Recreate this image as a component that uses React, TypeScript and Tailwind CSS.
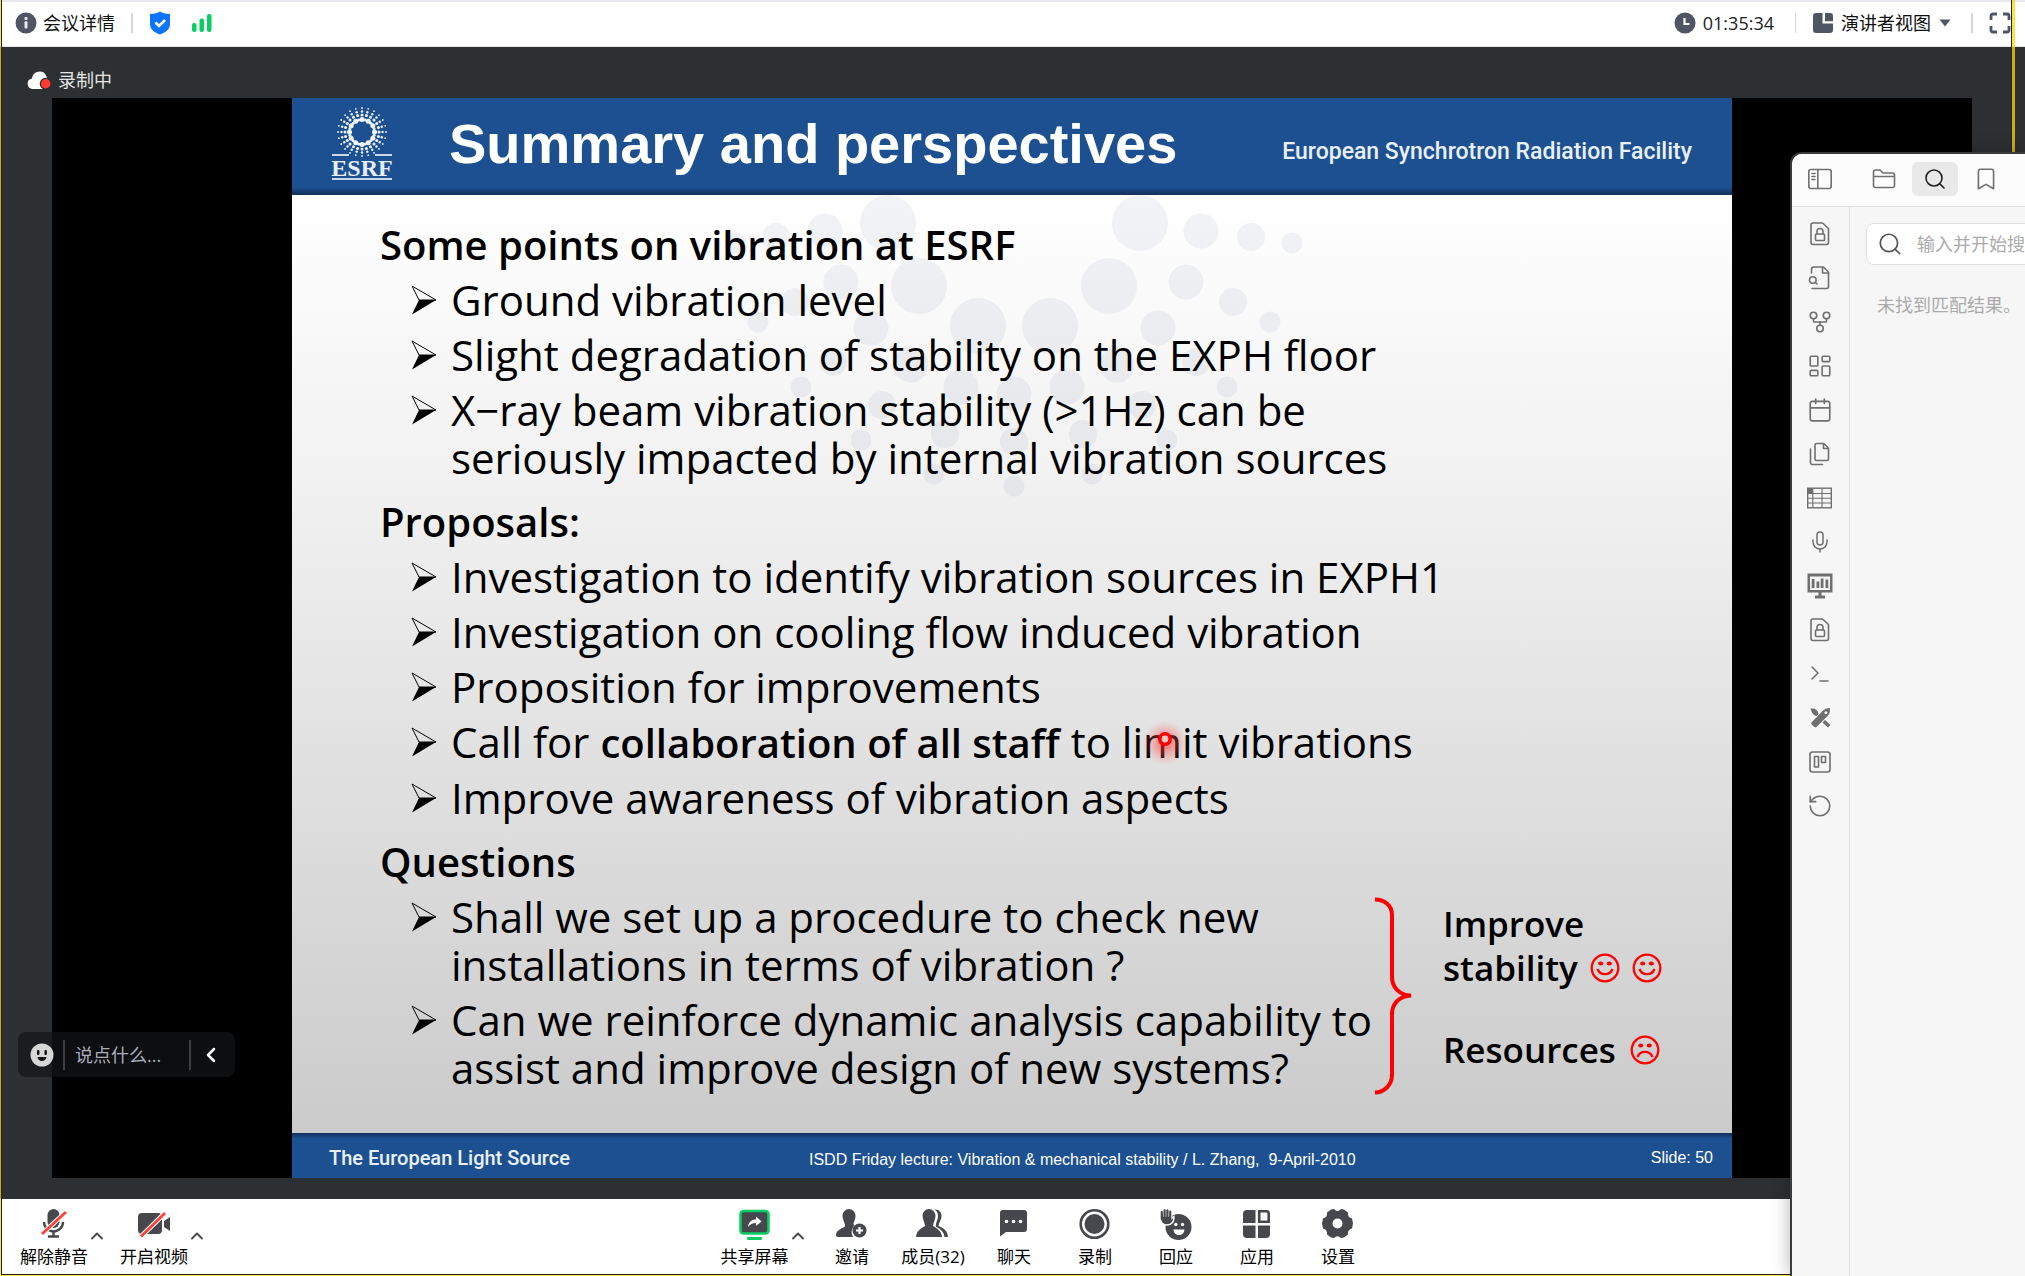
import React from "react";
import {
  Bookmark,
  Calendar,
  ChevronLeft,
  ChevronUp,
  GitFork,
  LayoutDashboard,
  Mic,
  RotateCcw,
  Search,
  Terminal,
} from "lucide-react";

/* ---------- top bar ---------- */

function InfoIcon() {
  return (
    <svg viewBox="0 0 22 22" className="size-[22px]" aria-hidden="true">
      <circle cx="11" cy="11" r="10.5" fill="#4f5563" />
      <rect x="9.5" y="5" width="3" height="3" rx="1" fill="#e8eaf0" />
      <rect x="9.5" y="9.2" width="3" height="7.3" rx="1" fill="#e8eaf0" />
    </svg>
  );
}

function ShieldIcon() {
  return (
    <svg viewBox="0 0 22 24" className="h-6 w-[22px]" aria-hidden="true">
      <path d="M11 .5 C14 2.3 17.5 3 21 3 V13 C21 18.500 16.500 21.500 11 23.500 C5.500 21.500 1 18.500 1 13 V3 C4.500 3 8 2.300 11 .5Z" fill="#0a74ff" />
      <path d="M6.500 11.500 L10 15 L16 9" fill="none" stroke="#fff" strokeWidth="2.600" />
    </svg>
  );
}

function SignalIcon() {
  return (
    <svg viewBox="0 0 22 20" className="h-5 w-[22px]" fill="#07cf63" aria-hidden="true">
      <rect x="1" y="10" width="4.500" height="9" rx="2" />
      <rect x="8.500" y="5.500" width="4.500" height="13.500" rx="2" />
      <rect x="16" y="1" width="4.500" height="18" rx="2" />
    </svg>
  );
}

function ClockIcon() {
  return (
    <svg viewBox="0 0 22 22" className="size-[22px]" aria-hidden="true">
      <circle cx="11" cy="11" r="10.500" fill="#4f5563" />
      <path d="M10.500 6 V12 H15.500" fill="none" stroke="#fff" strokeWidth="2.200" />
    </svg>
  );
}

function ViewIcon() {
  return (
    <svg viewBox="0 0 20 20" className="size-5" fill="#4f5563" aria-hidden="true">
      <path d="M3 0 H9.500 V10.500 H20 V17 a3 3 0 0 1 -3 3 H3 a3 3 0 0 1 -3 -3 V3 a3 3 0 0 1 3 -3Z" />
      <path d="M12 0 H17 a3 3 0 0 1 3 3 V8.200 H12Z" />
    </svg>
  );
}

function FullscreenIcon() {
  return (
    <svg viewBox="0 0 22 22" className="size-[22px]" fill="none" stroke="#4f5563" strokeWidth="2.800" aria-hidden="true">
      <path d="M2 8 V4 a2 2 0 0 1 2 -2 H8 M14 2 H18 a2 2 0 0 1 2 2 V8 M20 14 V18 a2 2 0 0 1 -2 2 H14 M8 20 H4 a2 2 0 0 1 -2 -2 V14" />
    </svg>
  );
}

function TopBar() {
  return (
    <header className="flex h-[47px] shrink-0 items-center justify-between border-t-2 border-b border-[#e7e9ef] bg-white pr-[14px] pb-0.5 pl-[15px] text-lg text-[#111]">
      <div className="flex items-center">
        <button type="button" className="flex items-center gap-[6px]">
          <InfoIcon />
          <span>会议详情</span>
        </button>
        <span className="ml-4 h-5 w-0.5 bg-[#d3d6de]" />
        <span className="ml-4">
          <ShieldIcon />
        </span>
        <span className="ml-5">
          <SignalIcon />
        </span>
      </div>
      <div className="flex items-center">
        <ClockIcon />
        <time className="ml-[7px] text-[#222]">01:35:34</time>
        <span className="ml-[21px] h-5 w-px bg-[#d3d6de]" />
        <button type="button" className="ml-[17px] flex items-center gap-2">
          <ViewIcon />
          <span>演讲者视图</span>
          <svg viewBox="0 0 12 8" className="h-2 w-3" aria-hidden="true">
            <path d="M.5 .5 H11.500 L6 7.500Z" fill="#4f5563" />
          </svg>
        </button>
        <span className="ml-5 h-5 w-0.5 bg-[#d3d6de]" />
        <button type="button" aria-label="全屏" className="ml-4">
          <FullscreenIcon />
        </button>
      </div>
    </header>
  );
}

/* ---------- slide ---------- */

const RAYS = Array.from({ length: 24 }, (_, i) => (i * Math.PI * 2) / 24);

function EsrfLogo() {
  return (
    <svg viewBox="0 0 62 76" className="h-[76px] w-[62px] shrink-0" aria-label="ESRF">
      <g fill="#eef4fb">
        {RAYS.map((a, i) =>
          [
            [12.5, i % 2 ? 1.5 : 2.5],
            [17, 1.5],
            [20.5, 1.2],
            [24, 0.9],
          ].map(([d, r]) => (
            <circle key={`${i}-${d}`} cx={31 + d * Math.cos(a)} cy={26 + d * Math.sin(a)} r={r} />
          ))
        )}
      </g>
      <path d="M1 49 H18 M44 49 H61 M1 73 H61" stroke="#c9d8ee" strokeWidth="2" />
      <text x="31" y="70" textAnchor="middle" fill="#e6eefa" fontSize="24" fontWeight="700" fontFamily="Liberation Serif, serif">
        ESRF
      </text>
    </svg>
  );
}

const DOTS: [number, [number, number][]][] = [
  [28, [[188, 28], [440, 28], [219, 91], [409, 91], [278, 131], [350, 131]]],
  [17.5, [[125, 36], [501, 36], [141, 87], [486, 87], [171, 133], [458, 133], [211, 170], [417, 170], [261, 192], [367, 192], [314, 199]]],
  [14, [[76, 42], [551, 42], [95, 107], [533, 107], [133, 167], [496, 167], [182, 210], [442, 210], [245, 239], [383, 239], [314, 247]]],
  [10.5, [[36, 48], [592, 48], [58, 127], [570, 127], [101, 192], [527, 192], [161, 245], [467, 245], [234, 279], [392, 279], [314, 291]]],
];

function DotRing() {
  return (
    <svg viewBox="0 0 628 304" className="absolute top-0 left-[408px] h-[304px] w-[628px]" aria-hidden="true">
      <g fill="#4a6490" fillOpacity="0.08">
        {DOTS.map(([r, pts]) => pts.map(([x, y]) => <circle key={`${x}-${y}`} cx={x} cy={y} r={r} />))}
      </g>
    </svg>
  );
}

function Bullet() {
  return (
    <svg viewBox="0 0 26 30" className="mt-[9px] h-[30px] w-[26px] shrink-0" aria-hidden="true">
      <path d="M1 1 L25 15 L8 15Z" fill="none" stroke="#000" strokeWidth="1" />
      <path d="M1 29.500 L25 15 H8Z" fill="#000" />
    </svg>
  );
}

function Section({ title, items }: { title: string; items: React.ReactNode[] }) {
  return (
    <section>
      <h2 className="text-[40px] leading-[48px] font-semibold">{title}</h2>
      <ul className="text-[42px] leading-[48px]">
        {items.map((item, i) => (
          <li key={i} className="mt-[7px] flex gap-[14px] pl-[31px]">
            <Bullet />
            <span>{item}</span>
          </li>
        ))}
      </ul>
    </section>
  );
}

function Face({ sad = false }: { sad?: boolean }) {
  return (
    <svg viewBox="0 0 30 30" className="size-[30px]" fill="none" stroke="#f00" strokeWidth="2.300" aria-label={sad ? "☹" : "☺"}>
      <circle cx="15" cy="15" r="13.300" />
      <ellipse cx="10.700" cy="10.500" rx="2.600" ry="2" fill="#f00" stroke="none" />
      <ellipse cx="19.300" cy="10.500" rx="2.600" ry="2" fill="#f00" stroke="none" />
      <path d={sad ? "M7.500 22 a8 8 0 0 1 15 0" : "M7.500 16 a8 8 0 0 0 15 0"} />
    </svg>
  );
}

function Laser() {
  return (
    <svg viewBox="0 0 60 60" className="absolute top-0 -left-2 size-[60px] max-w-none" aria-hidden="true">
      <defs>
        <radialGradient id="laser">
          <stop offset="0.1" stopColor="#ff3030" stopOpacity="0.6" />
          <stop offset="0.8" stopColor="#ff7070" stopOpacity="0" />
        </radialGradient>
      </defs>
      <circle cx="30" cy="30" r="28" fill="url(#laser)" />
      <circle cx="30" cy="26" r="5.200" fill="#f6c8c8" stroke="#f00" strokeWidth="3.600" />
    </svg>
  );
}

function Slide() {
  return (
    <article className="flex w-3/4 flex-col">
      <div className="flex h-[97px] shrink-0 items-center bg-linear-to-b from-[#1d5091] from-92% to-[#12305a] pr-10 pb-[5px] pl-[39px] text-white">
        <EsrfLogo />
        <h1 className="ml-14 flex-1 font-['Liberation_Sans',sans-serif] text-[56px] leading-[64px] font-bold whitespace-nowrap">
          Summary and perspectives
        </h1>
        <p className="mt-4 font-['Roboto',sans-serif] text-[23px] font-medium whitespace-nowrap text-[#e9f0fa]">
          European Synchrotron Radiation Facility
        </p>
      </div>

      <div className="relative flex-1 bg-linear-to-b from-white via-[#f0f0f0] via-33% to-[#cbcbcb]">
        <DotRing />
        <div className="relative flex flex-col gap-4 pt-[26px] pl-[88px] font-['Open_Sans',sans-serif] whitespace-nowrap text-black">
          <Section
            title="Some points on vibration at ESRF"
            items={[
              "Ground vibration level",
              "Slight degradation of stability on the EXPH floor",
              <>
                X−ray beam vibration stability (&gt;1Hz) can be
                <br />
                seriously impacted by internal vibration sources
              </>,
            ]}
          />
          <Section
            title="Proposals:"
            items={[
              "Investigation to identify vibration sources in EXPH1",
              "Investigation on cooling flow induced vibration",
              "Proposition for improvements",
              <>
                Call for <strong className="text-[40px] font-semibold">collaboration of all staff</strong> to li
                <span className="relative">
                  m
                  <Laser />
                </span>
                it vibrations
              </>,
              "Improve awareness of vibration aspects",
            ]}
          />
          <div className="flex">
            <div className="w-[995px]">
              <Section
                title="Questions"
                items={[
                  <>
                    Shall we set up a procedure to check new
                    <br />
                    installations in terms of vibration ?
                  </>,
                  <>
                    Can we reinforce dynamic analysis capability to
                    <br />
                    assist and improve design of new systems?
                  </>,
                ]}
              />
            </div>
            <svg viewBox="0 0 37 198" className="mt-[59px] h-[198px] w-[37px] shrink-0" fill="none" stroke="#f00" strokeWidth="4" aria-hidden="true">
              <path d="M0 2.500 C9 2.500 17 8 17 18 V80 C17 90 24 98 36 98.500 C24 99 17 107 17 117 V178 C17 188 9 195.500 0 195.500" />
            </svg>
            <div className="mt-16 ml-[31px] text-[35px] leading-[44px] font-semibold">
              <p>Improve</p>
              <p className="flex items-center gap-3">
                stability <Face /> <Face />
              </p>
              <p className="mt-[38px] flex items-center gap-[14px]">
                Resources <Face sad />
              </p>
            </div>
          </div>
        </div>
      </div>

      <footer className="flex h-[45px] shrink-0 items-center justify-between bg-linear-to-b from-[#12305a] to-[#1d5091] to-12% pt-1 pr-[19px] pl-[37px] text-white">
        <span className="font-['Roboto',sans-serif] text-xl font-medium text-[#e9f0fa]">The European Light Source</span>
        <span className="mt-1 mr-14 font-['Liberation_Sans',sans-serif] text-base whitespace-pre">
          {"ISDD Friday lecture: Vibration & mechanical stability / L. Zhang,  9-April-2010"}
        </span>
        <span className="font-['Liberation_Sans',sans-serif] text-base">Slide: 50</span>
      </footer>
    </article>
  );
}

/* ---------- stage ---------- */

function ChatBubble() {
  return (
    <form className="absolute bottom-[122px] left-[18px] flex h-[45px] w-[217px] items-center rounded-lg bg-[#121417]/70 text-lg">
      <button type="button" aria-label="表情" className="ml-3">
        <svg viewBox="0 0 24 24" className="size-6" aria-hidden="true">
          <circle cx="12" cy="12" r="11.500" fill="#d6d6d6" />
          <rect x="7" y="7" width="2.400" height="5" rx="1" fill="#111" />
          <rect x="14.500" y="7" width="2.400" height="5" rx="1" fill="#111" />
          <path d="M7.500 14 H16.500 a4.500 4 0 0 1 -9 0Z" fill="#111" />
        </svg>
      </button>
      <span className="ml-[9px] h-[30px] w-0.5 bg-[#3c3e42]" />
      <input
        aria-label="说点什么"
        placeholder="说点什么..."
        className="ml-[10px] w-0 flex-1 bg-transparent text-white outline-none placeholder:text-[#a9adbd]"
      />
      <span className="h-[30px] w-0.5 bg-[#3c3e42]" />
      <button type="button" aria-label="收起" className="mr-3 ml-2 text-white">
        <ChevronLeft className="size-6" strokeWidth={2.5} />
      </button>
    </form>
  );
}

function Stage() {
  return (
    <main className="relative flex flex-1 flex-col bg-[#2d3033] pr-[53px] pb-[21px] pl-[52px]">
      <div className="-ml-[25px] flex h-[51px] items-center gap-[7px] pt-[14px] text-lg text-[#e4e4e4]">
        <svg viewBox="0 0 24 20" className="h-5 w-6" aria-hidden="true">
          <path d="M5.500 19 a5.300 5.300 0 0 1 -.5 -10.500 A7.500 7.500 0 0 1 19.300 6 L20.500 9 V19Z" fill="#fff" />
          <circle cx="18.700" cy="13.800" r="6" fill="#2d3033" />
          <circle cx="18.700" cy="13.800" r="4.700" fill="#ff3b30" />
        </svg>
        <span>录制中</span>
      </div>
      <div className="flex flex-1 justify-center bg-black">
        <Slide />
      </div>
      <ChatBubble />
    </main>
  );
}

/* ---------- bottom toolbar ---------- */

const INK = "#46484d";

const ICONS = {
  mic: (
    <>
      <rect x="9.500" y="1" width="12" height="19" rx="6" fill={INK} />
      <path d="M6 14 a9.500 9.500 0 0 0 19 0 M15.500 24 V28 M10 28.500 H21" fill="none" stroke={INK} strokeWidth="2.400" />
      <path d="M4 26 L28 4" stroke="#fff" strokeWidth="5" />
      <path d="M4 26 L28 4" stroke="#ff4038" strokeWidth="2.800" />
    </>
  ),
  camera: (
    <>
      <rect x="0" y="5" width="24" height="21" rx="4" fill={INK} />
      <path d="M26 13 L32 9 V23 L26 19Z" fill={INK} />
      <path d="M3 28.500 L27 5" stroke="#fff" strokeWidth="5" />
      <path d="M3 28.500 L27 5" stroke="#ff4038" strokeWidth="2.800" />
    </>
  ),
  share: (
    <>
      <rect x="1.500" y="3" width="28" height="22.500" rx="3" fill={INK} stroke="#07cf63" strokeWidth="2.600" />
      <path d="M9 19 C9.500 14 12.500 11.500 17 11.500 V8.500 L22.500 13.500 L17 18 V15 C13.500 15 11 16.500 9 19Z" fill="#fff" />
      <rect x="8" y="29" width="15" height="3" rx="1" fill="#07cf63" />
    </>
  ),
  invite: (
    <>
      <path d="M13 1 a6.500 6.500 0 0 1 6.500 6.500 C19.500 11 18.500 13 17.500 15 L18 18 A9 9 0 0 0 17 29 H2 a2 2 0 0 1 -2 -2 C0 22 7 20 9 18.500 C9.500 16 6.500 12 6.500 7.500 A6.500 6.500 0 0 1 13 1Z" fill={INK} />
      <circle cx="23.500" cy="22.500" r="7" fill={INK} />
      <path d="M23.500 19 V26 M20 22.500 H27" stroke="#fff" strokeWidth="2.200" />
    </>
  ),
  members: (
    <>
      <path d="M12 1 a6.500 6.500 0 0 1 6.500 6.500 C18.500 12 16 15 16 18 C19 20 24.500 22 25 29 H-1 C-.5 22 5 20 8 18 C8 15 5.500 12 5.500 7.500 A6.500 6.500 0 0 1 12 1Z" fill={INK} />
      <path d="M17.500 1.500 C22 1 24.500 4 24.500 8 C24.500 12 21.500 15 21.500 18 C26 20 30.500 22 31 29 H27.500 C27 23 22.500 21 18.800 18.500 C18.800 14 21 12 21 8 C21 5 20 3 17.500 1.500Z" fill={INK} />
    </>
  ),
  chat: (
    <>
      <path d="M5 2 H26 a3 3 0 0 1 3 3 V21 a3 3 0 0 1 -3 3 H8 L2 28.500 V5 a3 3 0 0 1 3 -3Z" fill={INK} />
      <g fill="#fff">
        <circle cx="8.500" cy="13.500" r="1.800" />
        <circle cx="15.500" cy="13.500" r="1.800" />
        <circle cx="22.500" cy="13.500" r="1.800" />
      </g>
    </>
  ),
  record: (
    <>
      <circle cx="15.500" cy="16" r="13.800" fill="none" stroke={INK} strokeWidth="2.600" />
      <circle cx="15.500" cy="16" r="10" fill={INK} />
    </>
  ),
  react: (
    <>
      <circle cx="18.500" cy="19" r="13" fill={INK} />
      <path
        d="M1.800 4 V10 M4.600 2.300 V10 M7.400 2.300 V10 M10.200 3.500 V10"
        stroke="#fff"
        strokeWidth="4"
        strokeLinecap="round"
      />
      <path d="M.5 8 H11.400 V10.500 L14 8.500 C14 13 12 17 7 17 C3 17 .5 14 .5 11Z" fill={INK} stroke="#fff" strokeWidth="1.400" />
      <path
        d="M1.800 4 V11 M4.600 2.300 V11 M7.400 2.300 V11 M10.200 3.500 V11"
        stroke={INK}
        strokeWidth="2.200"
        strokeLinecap="round"
      />
      <circle cx="15.800" cy="16.500" r="1.700" fill="#fff" />
      <circle cx="22.500" cy="16.500" r="1.700" fill="#fff" />
      <path d="M13.500 21.500 H24.500 a5.500 5.500 0 0 1 -11 0Z" fill="#fff" />
    </>
  ),
  apps: (
    <>
      <path d="M6 2 H14.500 V15 H2 V6 a4 4 0 0 1 4 -4Z M2 17.500 H14.500 V30 H6 a4 4 0 0 1 -4 -4Z M17 17.500 H29 V26 a4 4 0 0 1 -4 4 H17Z" fill={INK} />
      <path d="M18.200 3.200 H25.500 a2.200 2.200 0 0 1 2.200 2.200 V13.800 H18.200Z" fill="#fff" stroke={INK} strokeWidth="2.600" />
    </>
  ),
  settings: (
    <path
      fillRule="evenodd"
      fill={INK}
      d="M9 1.500 L12 1 Q15.500 5 19 1 L22 1.500 L26 4.500 Q25.500 9.500 30 10.500 L31 15.500 L30 20.500 Q25.500 21.500 26 26.500 L22 29.500 L19 30 Q15.500 26.500 12 30 L9 29.500 L5 26.500 Q5.500 21.500 1 20.500 L0 15.500 L1 10.500 Q5.500 9.500 5 4.500Z M15.500 10.500 a5 5 0 1 0 0 10 a5 5 0 1 0 0 -10Z"
    />
  ),
};

function Tool({ icon, label, width = "w-[81px]" }: { icon: keyof typeof ICONS; label: string; width?: string }) {
  return (
    <button type="button" className={`flex shrink-0 flex-col items-center whitespace-nowrap ${width}`}>
      <svg viewBox="0 0 32 32" className="size-8 overflow-visible" aria-hidden="true">
        {ICONS[icon]}
      </svg>
      <span className="mt-[5px] text-[17px] leading-6">{label}</span>
    </button>
  );
}

function More({ label }: { label: string }) {
  return (
    <button type="button" aria-label={label} className="mt-[18px] size-5 shrink-0 self-start text-[#46484d]">
      <ChevronUp className="size-5" strokeWidth={2.2} />
    </button>
  );
}

function Toolbar() {
  return (
    <nav className="flex h-[77px] shrink-0 items-start bg-white pt-[9px] text-black">
      <div className="flex flex-1 basis-0 pl-[19px]">
        <Tool icon="mic" label="解除静音" width="w-[70px]" />
        <span className="-ml-0.5">
          <More label="音频选项" />
        </span>
        <span className="w-3" />
        <Tool icon="camera" label="开启视频" width="w-[70px]" />
        <span className="-ml-0.5">
          <More label="视频选项" />
        </span>
      </div>
      <div className="flex pl-[54px]">
        <Tool icon="share" label="共享屏幕" width="w-[70px]" />
        <span className="-ml-0.5">
          <More label="共享选项" />
        </span>
        <span className="w-1" />
        <Tool icon="invite" label="邀请" />
        <Tool icon="members" label="成员(32)" />
        <Tool icon="chat" label="聊天" />
        <Tool icon="record" label="录制" />
        <Tool icon="react" label="回应" />
        <Tool icon="apps" label="应用" />
        <Tool icon="settings" label="设置" />
      </div>
      <div className="flex-1 basis-0" />
    </nav>
  );
}

/* ---------- notes window ---------- */

function Line({ children }: { children: React.ReactNode }) {
  return (
    <svg viewBox="0 0 24 24" className="size-6" fill="none" stroke="currentColor" strokeWidth="1.600" strokeLinecap="round" strokeLinejoin="round" aria-hidden="true">
      {children}
    </svg>
  );
}

const FileLockIcon = () => (
  <Line>
    <path d="M5 1 H14.500 L20.500 6.500 V20.500 a2 2 0 0 1 -2 2 H5 a2 2 0 0 1 -2 -2 V3 a2 2 0 0 1 2 -2Z" />
    <rect x="7.500" y="12" width="9" height="6.500" rx="1" />
    <path d="M9 12 V9.500 a3 3 0 0 1 6 0 V12" />
  </Line>
);

const RIBBON: [string, React.ReactNode][] = [
  ["加密文件", <FileLockIcon />],
  [
    "搜索文件",
    <Line>
      <path d="M3.500 7 V3.500 a2.500 2.500 0 0 1 2.500 -2.500 H15.500 L20.500 6 V20.500 a2 2 0 0 1 -2 2 H4" />
      <path d="M14.500 1.500 V7 H20" />
      <circle cx="4.800" cy="14" r="3.300" />
      <path d="M7.500 16.500 L9 18" />
    </Line>,
  ],
  ["关系图谱", <GitFork className="size-[26px]" strokeWidth={1.5} />],
  ["白板", <LayoutDashboard className="size-[26px]" strokeWidth={1.5} />],
  ["日历", <Calendar className="size-[26px]" strokeWidth={1.5} />],
  [
    "模板",
    <Line>
      <path d="M8.500 1.500 H16 L20.500 6 V17 a1.500 1.500 0 0 1 -1.500 1.500 H8.500 A1.500 1.500 0 0 1 7 17 V3 A1.500 1.500 0 0 1 8.500 1.500Z M15.500 2 V6.500 H20" />
      <path d="M2.500 7 V20.500 a2 2 0 0 0 2 2 H14.500" />
    </Line>,
  ],
  [
    "表格",
    <svg viewBox="0 0 25 22" className="h-[22px] w-[25px]" fill="none" stroke="currentColor" aria-hidden="true">
      <rect x="0.700" y="1.200" width="23.600" height="19.600" strokeWidth="1.400" />
      <path d="M1 6.500 H24 M1 11.300 H24 M1 16 H24 M5.800 1.500 V20.500 M15 1.500 V20.500" strokeWidth="1.100" />
      <rect x="0.500" y="1" width="5.500" height="5.500" fill="currentColor" stroke="none" />
    </svg>,
  ],
  ["录音", <Mic className="size-6" strokeWidth={1.5} />],
  [
    "幻灯片",
    <svg viewBox="0 0 26 26" className="size-[26px]" fill="currentColor" aria-hidden="true">
      <path fillRule="evenodd" d="M.5 .5 H25.500 V19.500 H14.500 V22.500 H18 V25.500 H8 V22.500 H11.500 V19.500 H.5Z M3 3.500 V17 H23 V3.500Z" />
      <path d="M4.700 6 H7.500 V15 H4.700Z M9.500 8.500 H12.300 V15 H9.500Z M13.700 5.500 H16.500 V15 H13.700Z M18.500 6.500 H21.300 V15 H18.500Z" />
    </svg>,
  ],
  ["解密文件", <FileLockIcon />],
  ["命令面板", <Terminal className="size-6" strokeWidth={1.5} />],
  [
    "绘图",
    <svg viewBox="0 0 24 24" className="size-6" fill="currentColor" aria-hidden="true">
      <path d="M2.500 2.500 C7 2 10 4 10.500 8 L8.500 10 C5 9.500 3.500 6 2.500 2.500Z" />
      <path fillRule="evenodd" d="M22 2 C22 6 21.500 8 20 9.500 L8 21.500 C6.500 21.500 3 18.500 3 17 L14.500 5 C16.500 3 19 2.300 22 2Z M17.800 5.200 a1.500 1.500 0 1 0 .1 0Z" />
      <path d="M17 14 L22.500 19 L20 21.500 L14.500 16.500Z" />
    </svg>,
  ],
  [
    "看板",
    <Line>
      <rect x="2" y="2" width="20" height="20" rx="2.500" />
      <rect x="6.500" y="6.500" width="4" height="10.500" />
      <rect x="13.500" y="6.500" width="4" height="6" />
    </Line>,
  ],
  ["恢复", <RotateCcw className="size-[26px]" strokeWidth={1.5} />],
];

function NotesWindow() {
  return (
    <aside className="absolute top-[152px] right-0 bottom-0 flex w-[235px] flex-col overflow-hidden rounded-tl-xl border-t-2 border-l-2 border-[#3b3b3b] bg-[#f6f6f6] text-[#6f6f6f] shadow-[0_0_18px_rgba(0,0,0,0.3)]">
      <div className="flex h-[53px] shrink-0 items-center border-b border-[#e0e0e0] bg-[#fcfcfc] pb-0.5">
        <button type="button" aria-label="侧边栏" className="ml-4">
          <Line>
            <rect x="0.800" y="2.500" width="22.400" height="19" rx="2" />
            <path d="M9.800 2.500 V21.500 M4 6.500 H7 M4 9.500 H7 M4 12.500 H7" />
          </Line>
        </button>
        <button type="button" aria-label="文件" className="ml-10">
          <Line>
            <path d="M1.500 9 V5 a2 2 0 0 1 2 -2 H8 L11 6 H20.500 a2 2 0 0 1 2 2 V18.500 a2 2 0 0 1 -2 2 H3.500 a2 2 0 0 1 -2 -2 V9.500 H22.500" />
          </Line>
        </button>
        <button type="button" aria-label="搜索" className="ml-4 flex h-[34px] w-[46px] shrink-0 items-center justify-center rounded-md bg-[#e9e9e9] text-[#222]">
          <Search className="size-6" strokeWidth={1.6} />
        </button>
        <button type="button" aria-label="书签" className="ml-[15px] shrink-0">
          <Bookmark className="size-[26px]" strokeWidth={1.5} />
        </button>
      </div>
      <div className="flex flex-1">
        <div className="flex w-[58px] shrink-0 flex-col items-center border-r border-[#e0e0e0] pt-[5px] pr-[2px]">
          {RIBBON.map(([label, icon]) => (
            <button key={label} type="button" aria-label={label} className="flex size-11 items-center justify-center">
              {icon}
            </button>
          ))}
        </div>
        <div className="w-[320px] shrink-0 px-4 pt-4 text-lg">
          <label className="flex h-[42px] items-center gap-[14px] rounded-lg border border-[#e0e0e0] bg-white pl-[10px] text-[#555]">
            <Search className="size-[26px] shrink-0" strokeWidth={1.6} />
            <input aria-label="搜索" placeholder="输入并开始搜索..." className="w-0 flex-1 bg-transparent outline-none placeholder:text-[#ababab]" />
          </label>
          <p className="mt-[26px] pl-[11px] text-[#ababab]">未找到匹配结果。</p>
        </div>
      </div>
    </aside>
  );
}

export default function App() {
  return (
    <div className="relative flex min-h-screen flex-col overflow-hidden bg-white font-['Open_Sans','Noto_Sans_CJK_SC',sans-serif]">
      <TopBar />
      <Stage />
      <Toolbar />
      <div className="pointer-events-none absolute inset-y-0 right-[10px] left-0 border-r-3 border-b border-l border-[#ffd900]/75">
        <div className="h-full border-r border-b border-l border-[#222]" />
      </div>
      <NotesWindow />
    </div>
  );
}
